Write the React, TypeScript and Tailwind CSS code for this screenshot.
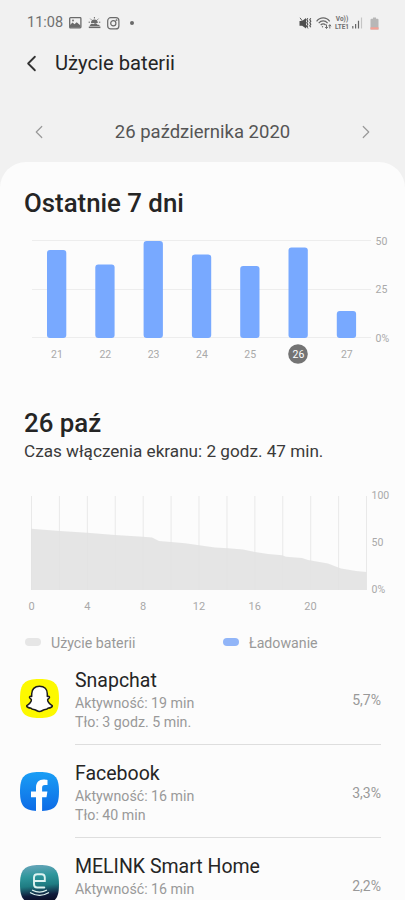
import type { ReactNode } from 'react';
import { ChevronLeft, ChevronRight } from 'lucide-react';

const days = [
  { label: '21', top: 250 },
  { label: '22', top: 264.5 },
  { label: '23', top: 241 },
  { label: '24', top: 254.5 },
  { label: '25', top: 266 },
  { label: '26', top: 247.5, selected: true },
  { label: '27', top: 311 },
];

const hours = ['0', '4', '8', '12', '16', '20'];

// Rounded app icon outline shared by every icon in the list
const squircle = 'M0 19.5C0 4.5 4.5 0 19.5 0S39 4.5 39 19.5 34.5 39 19.5 39 0 34.5 0 19.5z';

function StatusBar() {
  return (
    <div className="flex h-[46px] shrink-0 items-center pl-[27px] pr-[26px] text-[#6a6a6a]">
      <span className="text-[14.5px] leading-none text-[#707070]">11:08</span>
      <svg className="ml-[6px]" width="13" height="12" viewBox="0 0 13 12">
        <rect x="0.7" y="0.7" width="11.2" height="10.2" rx="0.8" fill="none" stroke="currentColor" strokeWidth="1.3" />
        <path d="M1 10.5V8l2.5-2.5 2 1.8 2.2-2.1L11.5 8.5v2z" fill="currentColor" />
        <circle cx="4" cy="3.5" r="0.9" fill="currentColor" />
      </svg>
      <svg className="ml-[6px]" width="13" height="12" viewBox="0 0 13 12" fill="currentColor">
        <path d="M3 6a3.4 3.4 0 0 1 6.8 0z" />
        <path d="M6.4 0v1.5M2.3 1.7l1 1M10.5 1.7l-1 1M.6 5.2h1.4M10.9 5.2h1.4" stroke="currentColor" strokeWidth="1" />
        <path d="M2 8.6C2.3 7 4 6.4 5.2 7.2 6.4 5.5 9 6 9.5 7.7c1.3-.2 2.2.4 2.3 1.4H1.5z" />
        <path d="M.8 9.5h11.6v1.6H.8z" />
      </svg>
      <svg className="ml-[6px]" width="13" height="13" viewBox="0 0 13 13" fill="none" stroke="currentColor" strokeWidth="1.2">
        <rect x="0.7" y="0.7" width="11.2" height="11.2" rx="3" />
        <circle cx="6.3" cy="6.3" r="2.6" />
        <circle cx="9.5" cy="3.2" r="0.3" />
      </svg>
      <span className="ml-[10px] size-1 rounded-full bg-[#6a6a6a]" />

      <svg className="ml-auto" width="13" height="13" viewBox="0 0 13 13" fill="none" stroke="#4f4f4f">
        <path d="M.5 4h2.7L7 1v10.5L3.2 8.7H.5z" fill="#4f4f4f" stroke="none" />
        <path d="M1 .8l8 10.7" stroke="#4f4f4f" strokeWidth="0.9" />
        <path d="M8.8 1.2l-1 1.5 1 1.5-1 1.5 1 1.5-1 1.5 1 1.5M11.8 1.2l-1 1.5 1 1.5-1 1.5 1 1.5-1 1.5 1 1.5" strokeWidth="1.1" />
      </svg>
      <svg className="ml-1" width="16" height="13" viewBox="0 0 16 13" fill="none" stroke="#686868" strokeWidth="1.2">
        <path d="M.6 4.3C4-.2 10.3-.2 13.7 4.3M2.7 6.2c2.5-3 6.4-3 8.9 0M4.700 8c1.500-1.600 3.400-1.600 4.900 0" />
        <circle cx="6.5" cy="9.7" r="0.7" fill="#686868" stroke="none" />
        <path d="M10.5 7.5v3.8M9.2 10l1.3 1.5 1.3-1.5M13.8 11.5V7.8M12.5 9.2l1.3-1.5 1.3 1.5" strokeWidth="1" />
      </svg>
      <div className="ml-[2px] w-[16px] text-center text-[6.5px] font-bold leading-[8px] text-[#707070]">
        <div>Vo))</div>
        <div>LTE1</div>
      </div>
      <svg className="ml-[2px]" width="11" height="12" viewBox="0 0 11 12">
        <path d="M.8 9v2.5M3.6 7v4.5M6.5 3.8v7.7" stroke="#666" strokeWidth="1.2" />
        <path d="M9.5.5v11" stroke="#c5c5c5" strokeWidth="1.2" />
      </svg>
      <svg className="ml-[7px]" width="9" height="13" viewBox="0 0 9 13">
        <path d="M3 .5h3v1.2h1.5q1 0 1 1V12.5h-8V2.7q0-1 1-1H3z" fill="#b7b7b7" />
        <path d="M.5 10.3h8v2.2h-8z" fill="#f4a195" />
      </svg>
    </div>
  );
}

function WeekChart() {
  return (
    <svg width="405" height="146" viewBox="0 230 405 146" className="block font-[Roboto,sans-serif] text-[10.5px]">
      <path d="M32 240.5H371M32 289.5H371M32 337.5H371" stroke="#ededed" />
      <g fill="#a9a9a9">
        <text x="375.5" y="244.5">50</text>
        <text x="375.5" y="293">25</text>
        <text x="375.5" y="341.5">0%</text>
      </g>
      {days.map((day, i) => {
        const x = 47 + i * 48.3;
        return (
          <g key={day.label}>
            <rect x={x} y={day.top} width="19.3" height={338 - day.top} rx="3" fill="#78a9ff" />
            {day.selected && <circle cx={x + 9.5} cy="354" r="9.8" fill="#747474" />}
            <text x={x + 10} y="358" textAnchor="middle" fontSize="10.5" fill={day.selected ? '#fff' : '#a9a9a9'}>
              {day.label}
            </text>
          </g>
        );
      })}
    </svg>
  );
}

function DayChart() {
  return (
    <svg width="405" height="130" viewBox="0 485 405 130" className="block font-[Roboto,sans-serif] text-[10.5px]">
      {Array.from({ length: 13 }, (_, i) => (
        <path key={i} d={`M${31.5 + i * 27.92} 496V590`} stroke="#e9e9e9" />
      ))}
      <path
        d="M31 528.7L60 531 87 532.7 115 535 143 536.7 152 537.5 159 541 171 542 185 543.3 215 547.5 228 548.3 243 549.5 255 552 268 554 282 555.2 286 556.7 302 558 308 560 328 563.5 337 567 341 568.5 356 571 366.5 572V590H31z"
        fill="#e2e2e2"
        fillOpacity="0.9"
      />
      <g fill="#a9a9a9">
        <text x="371.5" y="499">100</text>
        <text x="371.5" y="546">50</text>
        <text x="371.5" y="593">0%</text>
        {hours.map((hour, i) => (
          <text key={hour} x={31.5 + i * 55.8} y="610" textAnchor="middle" fontSize="11">
            {hour}
          </text>
        ))}
      </g>
    </svg>
  );
}

function SnapchatIcon() {
  return (
    <svg width="39" height="39" viewBox="0 0 39 39">
      <path d={squircle} fill="#fdf900" />
      <path
        d="M19.5 7.2c-5 0-7.8 3.3-7.8 7.6v2.600c-1.300-.3-2.300.1-2.200 1.100.1 1 1.600 1.200 1.900 2.200.3 1.600-2 4.600-4.700 5.900-.4 1.300 1.600 2.200 4.500 2.700.7 1.200 1.900 1.100 3.600 1.400 1.500.4 2.700 1.800 4.700 1.800s3.200-1.400 4.700-1.800c1.700-.3 2.900-.2 3.600-1.400 2.900-.5 4.900-1.400 4.500-2.700-2.700-1.300-5-4.300-4.700-5.900.3-1 1.800-1.200 1.900-2.200.1-1-.9-1.400-2.200-1.100v-2.600c0-4.300-2.800-7.600-7.800-7.600z"
        fill="#fff"
        stroke="#1c1c1c"
        strokeWidth="1.5"
        strokeLinejoin="round"
      />
    </svg>
  );
}

function FacebookIcon() {
  return (
    <svg width="39" height="39" viewBox="0 0 39 39">
      <defs>
        <linearGradient id="facebook" x1="0" y1="0" x2="0" y2="1">
          <stop offset="0" stopColor="#1a9ef5" />
          <stop offset="1" stopColor="#0d6be6" />
        </linearGradient>
      </defs>
      <path d={squircle} fill="url(#facebook)" />
      <path d="M16 38.9V25.3h-5v-5.9h5v-3.6c0-5.4 3-8.2 7.5-8.2 1.7 0 3.3.3 4 .4v5h-2.5c-2.3 0-2.9 1.3-2.9 2.9v3.5h5.3l-.9 5.9h-4.4v13.6z" fill="#fff" />
    </svg>
  );
}

function MelinkIcon() {
  return (
    <svg width="39" height="39" viewBox="0 0 39 39">
      <defs>
        <linearGradient id="melink" x1="0.2" y1="0" x2="0.3" y2="1">
          <stop offset="0" stopColor="#69a5ba" />
          <stop offset="0.3" stopColor="#2f979c" />
          <stop offset="0.55" stopColor="#1f7c82" />
          <stop offset="0.8" stopColor="#101c3c" />
          <stop offset="1" stopColor="#0a0a20" />
        </linearGradient>
      </defs>
      <path d={squircle} fill="url(#melink)" />
      <g fill="none" stroke="#def3f1" strokeLinecap="round">
        <path d="M14 16h10.8v-3.5q0-3.3-3.3-3.3h-4.2q-3.3 0-3.3 3.3v6.7q0 3.3 3.3 3.3h7" strokeWidth="1.9" />
        <path d="M12.5 25.2q7 3.8 14 0M10.5 27.8q9 5.2 18 0" strokeWidth="1.3" />
      </g>
    </svg>
  );
}

interface AppRowProps {
  icon: ReactNode;
  name: string;
  active: string;
  background?: string;
  percent: string;
}

function AppRow({ icon, name, active, background, percent }: AppRowProps) {
  return (
    <div className="flex h-[93px] pl-5 pr-6">
      <div className="mt-[27px] h-[39px] w-[39px] shrink-0">{icon}</div>
      <div className="ml-4 flex flex-1 border-b border-[#dedede]">
        <div className="flex-1 pt-[17px]">
          <div className="text-[19.5px] leading-6 text-[#252525]">{name}</div>
          <div className="mt-[1px] text-[14.2px] leading-[19px] text-[#999]">{active}</div>
          {background && <div className="text-[14.2px] leading-[19px] text-[#999]">{background}</div>}
        </div>
        <div className="mt-[38px] text-[14px] leading-5 text-[#999]">{percent}</div>
      </div>
    </div>
  );
}

export default function App() {
  return (
    <div className="flex h-[900px] w-[405px] flex-col overflow-hidden bg-[#f1f1f1] font-[Roboto,sans-serif]">
      <StatusBar />

      {/* Title */}
      <div className="flex h-[34px] shrink-0 items-center pl-[18px]">
        <ChevronLeft className="size-[27px] text-[#333]" strokeWidth={1.6} />
        <h1 className="ml-[10px] text-[20.2px] leading-none text-[#252525]">Użycie baterii</h1>
      </div>

      {/* Date switcher */}
      <div className="flex h-[82px] shrink-0 items-center justify-between px-7 pt-[22px]">
        <ChevronLeft className="size-[22px] text-[#999]" strokeWidth={1.3} />
        <span className="pt-px text-[18.5px] leading-none text-[#555]">26 października 2020</span>
        <ChevronRight className="size-[22px] text-[#999]" strokeWidth={1.3} />
      </div>

      <div className="min-h-0 flex-1 rounded-t-[26px] bg-[#fcfcfc]">
        <h2 className="h-[68px] pl-6 pt-[26px] text-[25.8px] font-medium leading-[30px] text-[#252525]">Ostatnie 7 dni</h2>
        <WeekChart />

        <div className="h-[109px] pl-6 pt-8">
          <h2 className="text-[25.8px] font-medium leading-[30px] text-[#252525]">26 paź</h2>
          <p className="mt-[3px] text-[17.15px] leading-5 text-[#3a3a3a]">Czas włączenia ekranu: 2 godz. 47 min.</p>
        </div>
        <DayChart />

        {/* Legend */}
        <div className="flex h-[37px] items-start pl-[25px] pt-[18px] text-[14.2px] leading-5 text-[#999]">
          <div className="flex w-[198px] items-center">
            <span className="mb-[2px] mr-[10px] h-2 w-4 rounded-full bg-[#e6e6e6]" />
            Użycie baterii
          </div>
          <div className="flex items-center">
            <span className="mb-[2px] mr-[10px] h-2 w-4 rounded-full bg-[#91b5f8]" />
            Ładowanie
          </div>
        </div>

        <AppRow icon={<SnapchatIcon />} name="Snapchat" active="Aktywność: 19 min" background="Tło: 3 godz. 5 min." percent="5,7%" />
        <AppRow icon={<FacebookIcon />} name="Facebook" active="Aktywność: 16 min" background="Tło: 40 min" percent="3,3%" />
        <AppRow icon={<MelinkIcon />} name="MELINK Smart Home" active="Aktywność: 16 min" percent="2,2%" />
      </div>
    </div>
  );
}
